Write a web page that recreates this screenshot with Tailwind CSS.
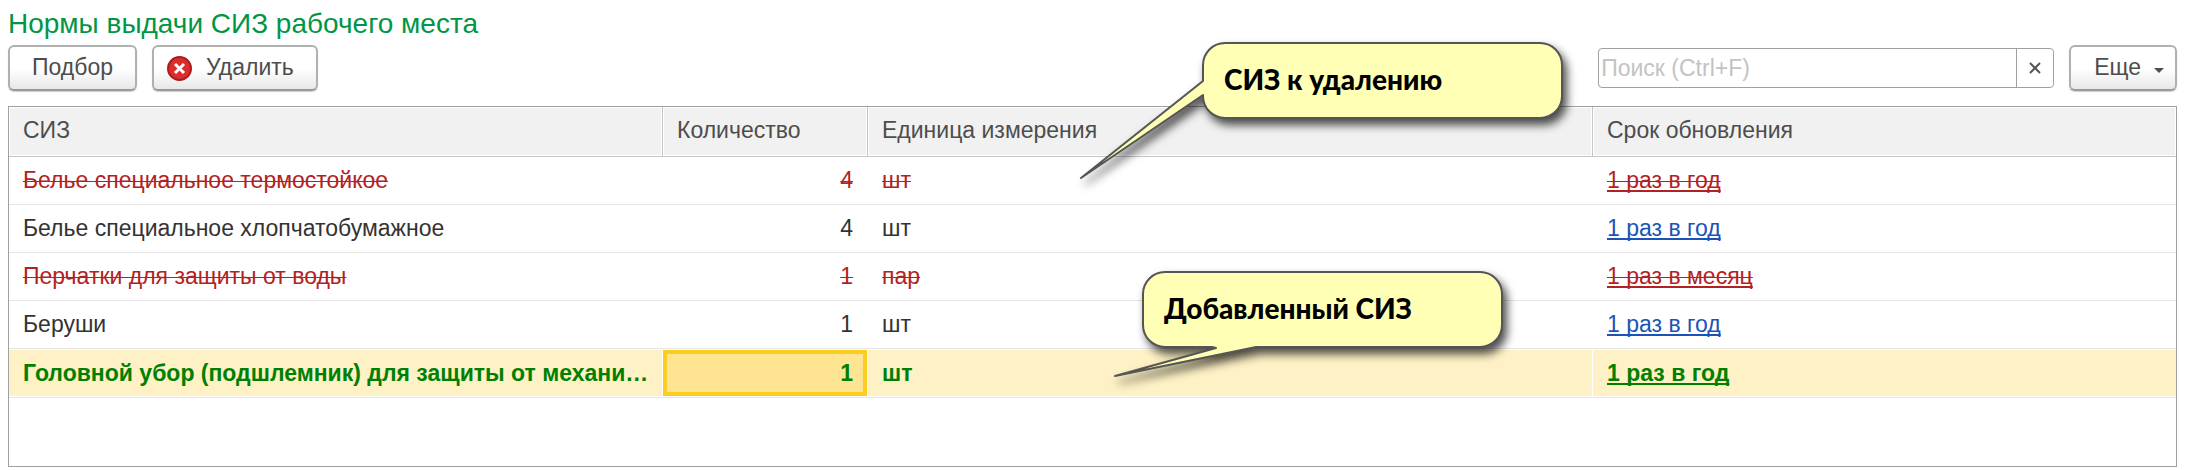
<!DOCTYPE html>
<html lang="ru">
  <head>
    <meta charset="UTF-8" />
    <meta name="viewport" content="width=device-width, initial-scale=1.0" />
    <script src="https://cdn.jsdelivr.net/npm/@tailwindcss/browser@4"></script>
    <title>Нормы выдачи СИЗ</title>
  </head>
  <body class="bg-white font-['Liberation_Sans',Arial,sans-serif] text-[23px] leading-7 text-[#333]">
    <main class="relative flex min-h-screen flex-col pt-2 pr-[9px] pb-[3px] pl-2">
      <h1 class="text-[28px] leading-8 text-[#009646]">Нормы выдачи СИЗ рабочего места</h1>

      <div class="mt-[5px] flex items-center text-[#4d4d4d]">
        <button
          type="button"
          class="h-[46px] rounded-md border-2 border-[#b0b0b0] border-b-[#999] bg-linear-to-b from-white from-50% to-[#e8e8e8] px-[22px] pb-0.5 shadow-[0_1px_1px_#ccc]"
        >
          Подбор
        </button>
        <button
          type="button"
          class="ml-[15px] flex h-[46px] items-center gap-3.5 rounded-md border-2 border-[#b0b0b0] border-b-[#999] bg-linear-to-b from-white from-50% to-[#e8e8e8] pr-[22px] pl-[13px] shadow-[0_1px_1px_#ccc]"
        >
          <svg class="size-[25px]" viewBox="0 0 25 25" aria-hidden="true">
            <circle cx="12.5" cy="12.5" r="11.5" fill="#dc2d2d" stroke="#ad1a1c" stroke-width="2" />
            <path d="M8 8l9 9M17 8l-9 9" stroke="#fff" stroke-width="3" />
          </svg>
          <span class="pb-0.5">Удалить</span>
        </button>

        <div class="ml-auto flex h-10 w-[456px] overflow-hidden rounded-[4px] border border-[#a0a0a0]">
          <input
            type="text"
            aria-label="Поиск"
            placeholder="Поиск (Ctrl+F)"
            class="min-w-0 flex-1 px-[2px] outline-none placeholder:text-[#c3c3c3]"
          />
          <button
            type="button"
            aria-label="Очистить"
            class="flex w-[37px] items-center justify-center border-l border-[#a0a0a0]"
          >
            <svg class="size-3" viewBox="0 0 12 12" aria-hidden="true">
              <path d="M1 1l10 10M11 1l-10 10" stroke="#555" stroke-width="2" />
            </svg>
          </button>
        </div>
        <button
          type="button"
          class="ml-[15px] flex h-[46px] items-center gap-[13px] rounded-md border-2 border-[#b0b0b0] border-b-[#999] bg-linear-to-b from-white from-50% to-[#e8e8e8] pr-[11px] pl-[23px] shadow-[0_1px_1px_#ccc]"
        >
          <span class="pb-0.5">Еще</span>
          <svg class="mt-1 h-[5px] w-[10px]" viewBox="0 0 10 5" aria-hidden="true">
            <path d="M0 0h10l-5 5z" fill="#4d4d4d" />
          </svg>
        </button>
      </div>

      <div class="mt-[15px] flex-1 border border-[#a0a0a0]">
        <table class="w-full table-fixed border-separate border-spacing-0 whitespace-nowrap">
          <colgroup>
            <col class="w-[654px]" />
            <col class="w-[205px]" />
            <col class="w-[725px]" />
            <col />
          </colgroup>
          <thead class="bg-[#f1f1f1] text-left text-[#4d4d4d]">
            <tr class="h-[50px]">
              <th class="border-r border-b border-[#c6c6c6] px-3.5 pb-[3px] font-normal shadow-[inset_0_0_0_1px_#fff]">СИЗ</th>
              <th class="border-r border-b border-[#c6c6c6] px-3.5 pb-[3px] font-normal shadow-[inset_0_0_0_1px_#fff]">Количество</th>
              <th class="border-r border-b border-[#c6c6c6] px-3.5 pb-[3px] font-normal shadow-[inset_0_0_0_1px_#fff]">Единица измерения</th>
              <th class="border-b border-[#c6c6c6] px-3.5 pb-[3px] font-normal shadow-[inset_0_0_0_1px_#fff]">Срок обновления</th>
            </tr>
          </thead>
          <tbody>
            <tr class="h-12 text-[#b22222]">
              <td class="border-b border-[#e4e4e4] px-3.5 pb-px"><del class="decoration-1">Белье специальное термостойкое</del></td>
              <td class="border-b border-[#e4e4e4] pr-[15px] pb-px text-right"><del class="decoration-1">4</del></td>
              <td class="border-b border-[#e4e4e4] px-3.5 pb-px"><del class="decoration-1">шт</del></td>
              <td class="border-b border-[#e4e4e4] px-3.5 pb-px">
                <a href="#" class="underline decoration-2 underline-offset-2 [text-decoration-skip-ink:none]"><del class="decoration-1">1 раз в год</del></a>
              </td>
            </tr>
            <tr class="h-12">
              <td class="border-b border-[#e4e4e4] px-3.5 pb-px">Белье специальное хлопчатобумажное</td>
              <td class="border-b border-[#e4e4e4] pr-[15px] pb-px text-right">4</td>
              <td class="border-b border-[#e4e4e4] px-3.5 pb-px">шт</td>
              <td class="border-b border-[#e4e4e4] px-3.5 pb-px">
                <a href="#" class="text-[#1a54b4] underline decoration-2 underline-offset-2 [text-decoration-skip-ink:none]">1 раз в год</a>
              </td>
            </tr>
            <tr class="h-12 text-[#b22222]">
              <td class="border-b border-[#e4e4e4] px-3.5 pb-px"><del class="decoration-1">Перчатки для защиты от воды</del></td>
              <td class="border-b border-[#e4e4e4] pr-[15px] pb-px text-right"><del class="decoration-1">1</del></td>
              <td class="border-b border-[#e4e4e4] px-3.5 pb-px"><del class="decoration-1">пар</del></td>
              <td class="border-b border-[#e4e4e4] px-3.5 pb-px">
                <a href="#" class="underline decoration-2 underline-offset-2 [text-decoration-skip-ink:none]"><del class="decoration-1">1 раз в месяц</del></a>
              </td>
            </tr>
            <tr class="h-12">
              <td class="border-b border-[#e4e4e4] px-3.5 pb-px">Беруши</td>
              <td class="border-b border-[#e4e4e4] pr-[15px] pb-px text-right">1</td>
              <td class="border-b border-[#e4e4e4] px-3.5 pb-px">шт</td>
              <td class="border-b border-[#e4e4e4] px-3.5 pb-px">
                <a href="#" class="text-[#1a54b4] underline decoration-2 underline-offset-2 [text-decoration-skip-ink:none]">1 раз в год</a>
              </td>
            </tr>
            <!-- selected row -->
            <tr class="h-[49px] bg-[#fdf1c5] font-bold text-[#008000]">
              <td class="border-r border-b border-r-white border-b-[#e4e4e4] px-3.5 shadow-[inset_0_1px_#fff,inset_0_-1px_#fff]">Головной убор (подшлемник) для защиты от механи…</td>
              <td class="border-r border-b border-r-white border-b-[#e4e4e4] bg-[#ffe592] pr-3.5 text-right shadow-[inset_0_1px_#fff,inset_0_-1px_#fff,inset_0_5px_#fbcd20,inset_0_-5px_#fbcd20,inset_4px_0_#fbcd20,inset_-4px_0_#fbcd20]">1</td>
              <td class="border-r border-b border-r-white border-b-[#e4e4e4] px-3.5 shadow-[inset_0_1px_#fff,inset_0_-1px_#fff]">шт</td>
              <td class="border-b border-[#e4e4e4] px-3.5 shadow-[inset_0_1px_#fff,inset_0_-1px_#fff]">
                <a href="#" class="underline decoration-2 underline-offset-2 [text-decoration-skip-ink:none]">1 раз в год</a>
              </td>
            </tr>
          </tbody>
        </table>
      </div>

      <!-- callouts -->
      <div class="absolute top-[42px] left-[1202px] h-[77px] w-[361px] font-[Lato,'Open_Sans',sans-serif] text-[28px] font-black text-black">
        <svg class="absolute inset-0 size-full overflow-visible drop-shadow-[4px_6px_5px_rgb(0_0_0/0.7)]" viewBox="0 0 361 77" aria-hidden="true">
          <path
            d="M23 1H338A22 22 0 0 1 360 23V54A22 22 0 0 1 338 76H23A22 22 0 0 1 1 54L1 53L-121 136L1 39V23A22 22 0 0 1 23 1Z"
            fill="#ffffb5" stroke="#555" stroke-width="2" stroke-linejoin="round"
          />
        </svg>
        <p class="relative px-[22px] pt-[23px]">СИЗ к удалению</p>
      </div>
      <div class="absolute top-[271px] left-[1142px] h-[77px] w-[361px] font-[Lato,'Open_Sans',sans-serif] text-[28px] font-black text-black">
        <svg class="absolute inset-0 size-full overflow-visible drop-shadow-[4px_6px_5px_rgb(0_0_0/0.7)]" viewBox="0 0 361 77" aria-hidden="true">
          <path
            d="M23 1H338A22 22 0 0 1 360 23V54A22 22 0 0 1 338 76H114L-27 105L74 77L70 76H23A22 22 0 0 1 1 54V23A22 22 0 0 1 23 1Z"
            fill="#ffffb5" stroke="#555" stroke-width="2" stroke-linejoin="round"
          />
        </svg>
        <p class="relative px-[22px] pt-[23px]">Добавленный СИЗ</p>
      </div>
    </main>
  </body>
</html>
